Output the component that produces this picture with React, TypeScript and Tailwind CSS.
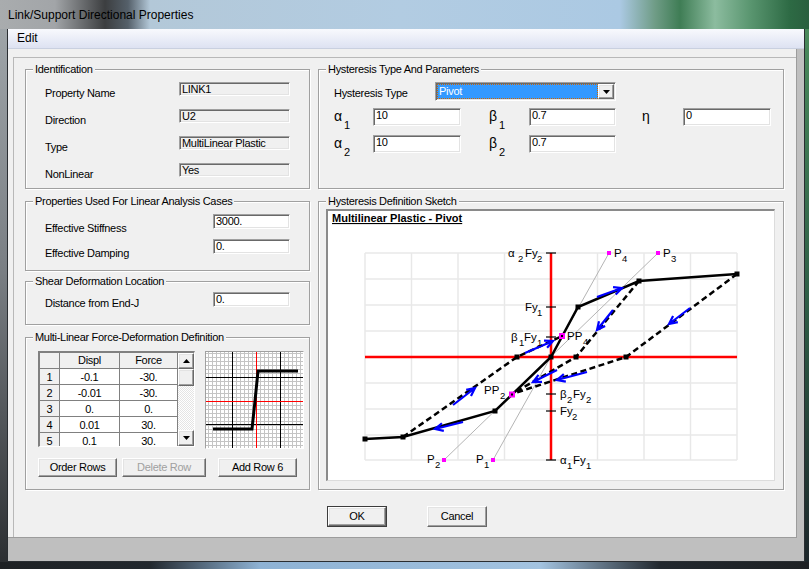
import React from "react";

const sunken =
  "border border-t-[#a0a0a0] border-l-[#a0a0a0] border-b-white border-r-white shadow-[inset_1px_1px_0_#696969,inset_-1px_-1px_0_#e3e3e3]";
const raised =
  "border border-t-white border-l-white border-b-[#696969] border-r-[#696969] shadow-[inset_-1px_-1px_0_#a0a0a0,inset_1px_1px_0_#e3e3e3]";

function Group({ title, className = "", children }: { title: string; className?: string; children?: React.ReactNode }) {
  return (
    <div className={`border border-[#a0a0a0] shadow-[inset_1px_1px_0_#fff,1px_1px_0_#fff] ${className}`}>
      <div className="-mt-[7px] ml-[7px] h-[13px] w-fit bg-[#f0f0f0] px-[2px] leading-[13px]">{title}</div>
      {children}
    </div>
  );
}

function Field({ value, w, h, disabled }: { value: string; w: string; h: string; disabled?: boolean }) {
  return (
    <div className={`${w} ${h} shrink-0 ${disabled ? "bg-[#f0f0f0]" : "bg-white"} ${sunken} overflow-hidden whitespace-nowrap pl-[2px] leading-[13px]`}>
      {value}
    </div>
  );
}

function Greek({ ch, sub, w }: { ch: string; sub?: string; w: string }) {
  return (
    <div className={`flex ${w} shrink-0 items-start`}>
      <span className="pt-[1px] text-[14px] leading-[14px] tracking-normal">{ch}</span>
      {sub && <span className="ml-[2px] pt-[12px] text-[11px] leading-[11px]">{sub}</span>}
    </div>
  );
}

function Btn({ children, w, disabled }: { children: React.ReactNode; w: string; disabled?: boolean }) {
  return (
    <div className={`${w} flex h-[19px] items-center justify-center bg-[#f0f0f0] ${raised} ${disabled ? "text-[#a0a0a0]" : ""}`}>
      {children}
    </div>
  );
}

function Tri({ up }: { up?: boolean }) {
  return (
    <svg width="7" height="4" viewBox="0 0 7 4">
      <path d={up ? "M0 4L3.5 0L7 4Z" : "M0 0L7 0L3.5 4Z"} fill="#000" />
    </svg>
  );
}

const rows = [
  ["1", "-0.1", "-30."],
  ["2", "-0.01", "-30."],
  ["3", "0.", "0."],
  ["4", "0.01", "30."],
  ["5", "0.1", "30."],
];

function Table() {
  return (
    <div className="flex h-[96px] w-[157px] overflow-hidden border-l-2 border-t-2 border-b border-r border-l-[#808080] border-t-[#808080] border-b-white border-r-white">
      <div className="grid h-[110px] grid-cols-[19px_59px_57px] content-start gap-px border-r border-[#808080] bg-[#808080]">
        <div className="h-[15px] bg-[#f0f0f0]" />
        <div className="h-[15px] bg-[#f0f0f0] text-center leading-[15px]">Displ</div>
        <div className="h-[15px] bg-[#f0f0f0] text-center leading-[15px]">Force</div>
        {rows.map(([n, d, f]) => (
          <React.Fragment key={n}>
            <div className="h-[15px] bg-[#f0f0f0] text-center leading-[16px]">{n}</div>
            <div className="h-[15px] bg-white text-center leading-[16px]">{d}</div>
            <div className="h-[15px] bg-white text-center leading-[16px]">{f}</div>
          </React.Fragment>
        ))}
      </div>
      <div className="flex w-[16px] flex-col">
        <div className={`flex h-[16px] items-center justify-center bg-[#f0f0f0] ${raised}`}>
          <Tri up />
        </div>
        <div className={`h-[17px] bg-[#f0f0f0] ${raised}`} />
        <div className="flex-1 bg-[repeating-conic-gradient(#ffffff_0_25%,#e4e4e4_0_50%)] bg-[length:2px_2px]" />
        <div className={`flex h-[16px] items-center justify-center bg-[#f0f0f0] ${raised}`}>
          <Tri />
        </div>
      </div>
    </div>
  );
}

function MiniChart() {
  const vx: number[] = [];
  for (let k = -12; k <= 11; k++) vx.push(256.5 + 4 * k);
  const hy: number[] = [];
  for (let k = -12; k <= 11; k++) hy.push(401.5 + 4 * k);
  return (
    <div className="h-[98px] w-[99px] border border-[#a0a0a0] border-b-white border-r-white bg-white">
      <svg width="97" height="96" viewBox="206 352 97 96" className="block">
        {vx.map((x) => (
          <line key={"v" + x} x1={x} y1={352} x2={x} y2={448} stroke="#c4c4c4" strokeWidth="1" />
        ))}
        {hy.map((y) => (
          <line key={"h" + y} x1={206} y1={y} x2={303} y2={y} stroke="#c4c4c4" strokeWidth="1" />
        ))}
        <line x1={232.5} y1={352} x2={232.5} y2={448} stroke="#000" />
        <line x1={280.5} y1={352} x2={280.5} y2={448} stroke="#000" />
        <line x1={206} y1={377.5} x2={303} y2={377.5} stroke="#000" />
        <line x1={206} y1={424.5} x2={303} y2={424.5} stroke="#000" />
        <line x1={256.5} y1={352} x2={256.5} y2={448} stroke="#ff0000" />
        <line x1={206} y1={401.5} x2={303} y2={401.5} stroke="#ff0000" />
        <polyline points="213,429 252,429 255,401 258,371 298,371" fill="none" stroke="#000" strokeWidth="3" />
      </svg>
    </div>
  );
}

type Part = [string, number, boolean];
function Lbl({ parts, y }: { parts: Part[]; y: number }) {
  return (
    <text fontFamily="Liberation Sans, Arial, sans-serif" fill="#000">
      {parts.map(([t, x, sub], i) => (
        <tspan key={i} x={x} y={sub ? y + 5 : y} fontSize={sub ? 9.5 : 11.5}>
          {t}
        </tspan>
      ))}
    </text>
  );
}

function arrowPath(x1: number, y1: number, x2: number, y2: number) {
  const a = Math.atan2(y2 - y1, x2 - x1);
  const L = 9;
  const s = 0.45;
  const ax = x2 - L * Math.cos(a - s);
  const ay = y2 - L * Math.sin(a - s);
  const bx = x2 - L * Math.cos(a + s);
  const by = y2 - L * Math.sin(a + s);
  return `M${x1} ${y1}L${x2} ${y2}M${ax} ${ay}L${x2} ${y2}L${bx} ${by}`;
}

function Sketch() {
  const gx = [365, 411.5, 458, 504.5, 597.5, 644, 690.5, 737];
  const gy = [253, 279, 305, 331, 383, 409, 435, 460];
  const markers = [
    [365, 439], [403, 437], [495, 411], [551, 357], [578, 307], [639, 281], [737, 274],
    [517, 357], [576, 357], [626, 357],
  ];
  const arrows = [
    [453, 405, 475, 388],
    [463, 422, 435, 429],
    [525, 353, 553, 341],
    [557, 370, 533, 382],
    [587, 372, 557, 380],
    [597, 297, 622, 288],
    [613, 310, 597, 330],
    [690, 308, 669, 324],
  ];
  const ticks = [253, 307, 337, 394, 411, 460];
  const pts = [[609, 253], [658, 253], [493, 460], [444, 460]];
  return (
    <svg width="446" height="269" viewBox="328 211 446 269" className="block" letterSpacing="0">
      <text x={332} y={222} fontFamily="Liberation Sans, Arial, sans-serif" fontSize="11" fontWeight="bold" textDecoration="underline">
        Multilinear Plastic - Pivot
      </text>
      {gx.map((x) => (
        <line key={"gx" + x} x1={x} y1={253} x2={x} y2={460} stroke="#e8e8e8" strokeWidth="1.5" />
      ))}
      {gy.map((y) => (
        <line key={"gy" + y} x1={365} y1={y} x2={737} y2={y} stroke="#e8e8e8" strokeWidth="1.5" />
      ))}
      <line x1={365} y1={357} x2={737} y2={357} stroke="#ff0000" strokeWidth="2.5" />
      <line x1={551} y1={253} x2={551} y2={460} stroke="#ff0000" strokeWidth="2.5" />
      {ticks.map((y) => (
        <line key={"t" + y} x1={546} y1={y} x2={556} y2={y} stroke="#000" strokeWidth="1.2" />
      ))}
      <line x1={609} y1={253} x2={493} y2={460} stroke="#b4b4b4" strokeWidth="1" />
      <line x1={658} y1={253} x2={444} y2={460} stroke="#b4b4b4" strokeWidth="1" />
      <polyline points="639,281 576,357 512,394" fill="none" stroke="#000" strokeWidth="2.5" strokeDasharray="6 3.5" />
      <polyline points="737,274 626,357 512,394" fill="none" stroke="#000" strokeWidth="2.5" strokeDasharray="6 3.5" />
      <polyline points="403,437 517,357 562,336" fill="none" stroke="#000" strokeWidth="2.5" strokeDasharray="6 3.5" />
      <polyline points="365,439 403,437 495,411 551,357 578,307 639,281 737,274" fill="none" stroke="#000" strokeWidth="2.5" />
      {markers.map(([x, y], i) => (
        <rect key={"m" + i} x={x - 2.5} y={y - 2.5} width="5" height="5" fill="#000" />
      ))}
      {arrows.map(([a, b, c, d], i) => (
        <path key={"a" + i} d={arrowPath(a, b, c, d)} fill="none" stroke="#0000ff" strokeWidth="2.2" />
      ))}
      {pts.map(([x, y], i) => (
        <rect key={"p" + i} x={x - 2} y={y - 2} width="4" height="4" fill="#ff00ff" />
      ))}
      <rect x={559} y={333} width="6" height="6" fill="#ff00ff" />
      <rect x={561} y={335} width="2" height="2" fill="#000" />
      <rect x={509} y={391.5} width="6" height="6" fill="#ff00ff" />
      <rect x={511} y={393.5} width="2" height="2" fill="#000" />
      <Lbl y={257} parts={[["α", 508, false], ["2", 518, true], ["Fy", 525, false], ["2", 537, true]]} />
      <Lbl y={311} parts={[["Fy", 525, false], ["1", 537, true]]} />
      <Lbl y={341} parts={[["β", 511, false], ["1", 519, true], ["Fy", 524, false], ["1", 537, true]]} />
      <Lbl y={398} parts={[["β", 560, false], ["2", 567, true], ["Fy", 573, false], ["2", 586, true]]} />
      <Lbl y={415} parts={[["Fy", 560, false], ["2", 572, true]]} />
      <Lbl y={464} parts={[["α", 560, false], ["1", 567, true], ["Fy", 573, false], ["1", 586, true]]} />
      <Lbl y={257} parts={[["P", 614, false], ["4", 622, true]]} />
      <Lbl y={257} parts={[["P", 663, false], ["3", 671, true]]} />
      <Lbl y={340} parts={[["PP", 567, false], ["4", 583, true]]} />
      <Lbl y={394} parts={[["PP", 484, false], ["2", 500, true]]} />
      <Lbl y={463} parts={[["P", 427, false], ["2", 435, true]]} />
      <Lbl y={463} parts={[["P", 476, false], ["1", 484, true]]} />
    </svg>
  );
}

export default function App() {
  return (
    <div className="flex h-[569px] w-[809px] flex-col overflow-hidden bg-[#1e2124] font-['Liberation_Sans',Arial,sans-serif] text-[11px] tracking-[-0.3px] text-black">
      <div className="flex h-[29px] shrink-0 items-center bg-[linear-gradient(to_right,#a9acae_0px,#a2a5a8_55px,#3c3e40_105px,#55606a_128px,#b3c8d8_150px,#b2cce2_400px,#abc9e3_620px,#6f9c86_655px,#3f7d55_680px,#8cbc9f_715px,#5a9670_750px,#2d6a44_790px,#2a5f3f_809px)] pl-[8px] text-[12px] tracking-normal">
        Link/Support Directional Properties
      </div>
      <div className="flex h-[533px] shrink-0">
        <div className="w-[7px] bg-[linear-gradient(to_bottom,#9ea4a8,#7a7f84_45%,#2c2f32)]" />
        <div className="flex w-[798px] flex-col border-x border-b border-[#2a2e32] bg-[#bfbfbf]">
          <div className="h-[20px] shrink-0 border-b border-[#c9d0e0] bg-[linear-gradient(to_bottom,#f8f9fd,#dde2f2)] pl-[9px] text-[12px] leading-[19px] tracking-normal">
            Edit
          </div>
          <div className="h-[489px] w-[789px] shrink-0 border-b border-r border-[#9c9c9c] bg-[#f0f0f0] pl-[5px] pt-[8px]">
            <div className="flex h-full flex-col border-l border-t border-[#b8b8b8] pl-[11px] pt-[11px]">
              <div className="flex gap-[8px]">
                <div className="flex w-[285px] flex-col">
                  <Group title="Identification" className="h-[120px]">
                    <div className="flex flex-col gap-[13px] pl-[19px] pt-[6px]">
                      {[
                        ["Property Name", "LINK1"],
                        ["Direction", "U2"],
                        ["Type", "MultiLinear Plastic"],
                        ["NonLinear", "Yes"],
                      ].map(([l, v]) => (
                        <div key={l} className="flex h-[14px]">
                          <div className="w-[134px] shrink-0 pt-[5px] leading-[13px]">{l}</div>
                          <Field value={v} w="w-[111px]" h="h-[14px]" disabled />
                        </div>
                      ))}
                    </div>
                  </Group>
                  <Group title="Properties Used For Linear Analysis Cases" className="mt-[12px] h-[70px]">
                    <div className="flex flex-col gap-[10px] pl-[19px] pt-[6px]">
                      {[
                        ["Effective Stiffness", "3000."],
                        ["Effective Damping", "0."],
                      ].map(([l, v]) => (
                        <div key={l} className="flex h-[15px]">
                          <div className="w-[168px] shrink-0 pt-[8px] leading-[13px]">{l}</div>
                          <Field value={v} w="w-[77px]" h="h-[15px]" />
                        </div>
                      ))}
                    </div>
                  </Group>
                  <Group title="Shear Deformation Location" className="mt-[10px] h-[44px]">
                    <div className="flex h-[15px] pl-[19px] pt-0">
                      <div className="mt-[4px] flex h-[15px]">
                        <div className="w-[168px] shrink-0 pt-[5px] leading-[13px]">Distance from End-J</div>
                        <Field value="0." w="w-[77px]" h="h-[15px]" />
                      </div>
                    </div>
                  </Group>
                  <Group title="Multi-Linear Force-Deformation Definition" className="mt-[12px] h-[153px]">
                    <div className="ml-[12px] mt-[7px] flex gap-[10px]">
                      <Table />
                      <MiniChart />
                    </div>
                    <div className="ml-[12px] mt-[9px] flex">
                      <Btn w="w-[79px]">Order Rows</Btn>
                      <div className="ml-[5px]">
                        <Btn w="w-[84px]" disabled>
                          Delete Row
                        </Btn>
                      </div>
                      <div className="ml-[12px]">
                        <Btn w="w-[79px]">Add Row 6</Btn>
                      </div>
                    </div>
                  </Group>
                </div>
                <div className="flex w-[466px] flex-col">
                  <Group title="Hysteresis Type And Parameters" className="h-[120px]">
                    <div className="pl-[15px] pt-[6px]">
                      <div className="flex h-[19px]">
                        <div className="w-[101px] shrink-0 pt-[5px] leading-[13px]">Hysteresis Type</div>
                        <div className={`flex h-[19px] w-[181px] ${sunken} bg-white p-[1px]`}>
                          <div className="flex-1 border border-dotted border-[#cc6600] bg-[#3399ff] pl-[1px] leading-[13px] text-white">
                            Pivot
                          </div>
                          <div className={`flex w-[16px] items-center justify-center bg-[#f0f0f0] ${raised}`}>
                            <Tri />
                          </div>
                        </div>
                      </div>
                      <div className="mt-[7px] flex h-[18px]">
                        <Greek ch="α" sub="1" w="w-[39px]" />
                        <Field value="10" w="w-[88px]" h="h-[18px]" />
                        <div className="ml-[28px] flex">
                          <Greek ch="β" sub="1" w="w-[40px]" />
                          <Field value="0.7" w="w-[87px]" h="h-[18px]" />
                        </div>
                        <div className="ml-[26px] flex">
                          <Greek ch="η" w="w-[41px]" />
                          <Field value="0" w="w-[88px]" h="h-[18px]" />
                        </div>
                      </div>
                      <div className="mt-[9px] flex h-[18px]">
                        <Greek ch="α" sub="2" w="w-[39px]" />
                        <Field value="10" w="w-[88px]" h="h-[18px]" />
                        <div className="ml-[28px] flex">
                          <Greek ch="β" sub="2" w="w-[40px]" />
                          <Field value="0.7" w="w-[87px]" h="h-[18px]" />
                        </div>
                      </div>
                    </div>
                  </Group>
                  <Group title="Hysteresis Definition Sketch" className="mt-[12px] h-[289px]">
                    <div className="ml-[7px] mt-[1px] h-[272px] w-[449px] border-l-2 border-t-2 border-b border-r border-l-[#8a8a8a] border-t-[#8a8a8a] border-b-[#dcdcdc] border-r-[#dcdcdc] bg-white">
                      <Sketch />
                    </div>
                  </Group>
                </div>
              </div>
              <div className="mt-[16px] flex pl-[302px]">
                <div className="h-[21px] w-[60px] border border-[#3c3c3c]">
                  <div className={`flex h-full w-full items-center justify-center bg-[#f0f0f0] ${raised}`}>OK</div>
                </div>
                <div className={`ml-[40px] flex h-[21px] w-[60px] items-center justify-center bg-[#f0f0f0] ${raised}`}>Cancel</div>
              </div>
            </div>
          </div>
        </div>
        <div className="w-[4px] bg-[linear-gradient(to_bottom,#4a8a5c,#2f5f47_50%,#1c262a)]" />
      </div>
      <div className="h-[7px] shrink-0 bg-[linear-gradient(to_right,#1e2124_0px,#22282e_150px,#8eb2d4_260px,#a3c3e0_540px,#22282e_660px,#1e2124_809px)]" />
    </div>
  );
}
